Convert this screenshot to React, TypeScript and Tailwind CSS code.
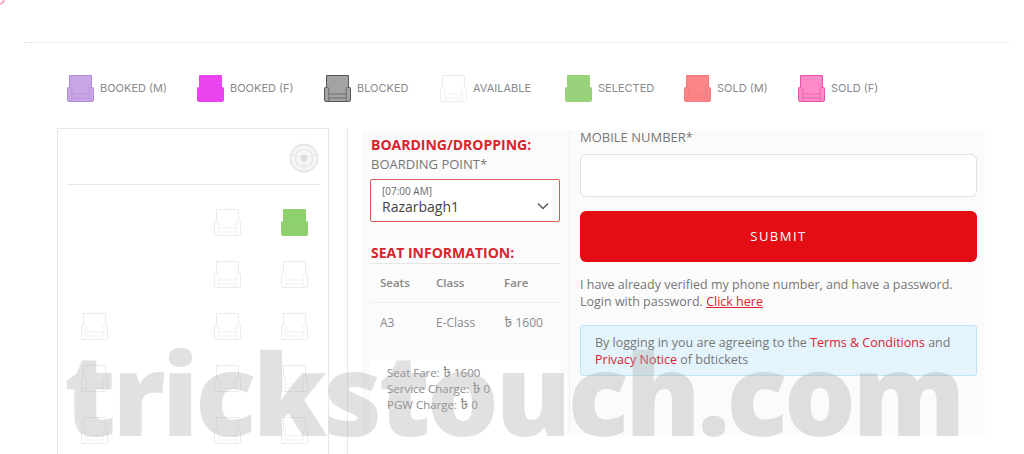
type SeatProps = {
  fill: string;
  stroke: string;
};

const legend = [
  { label: "BOOKED (M)", fill: "#c9a6e6", stroke: "#b08fd6", gap: "w-[130px]" },
  { label: "BOOKED (F)", fill: "#ea44ee", stroke: "#ea44ee", gap: "w-[127px]" },
  { label: "BLOCKED", fill: "#a3a3a3", stroke: "#555555", gap: "w-[116px]" },
  { label: "AVAILABLE", fill: "#ffffff", stroke: "#ececec", gap: "w-[125px]" },
  { label: "SELECTED", fill: "#98d27a", stroke: "#98d27a", gap: "w-[119px]" },
  { label: "SOLD (M)", fill: "#fc8585", stroke: "#f27c7c", gap: "w-[114px]" },
  { label: "SOLD (F)", fill: "#ff8ac8", stroke: "#e952a8", gap: "w-[100px]" }
];

const free = { fill: "#ffffff", stroke: "#ebebeb" };

function Seat({ fill, stroke }: SeatProps) {
  return (
    <svg width="27" height="27" viewBox="0 0 27 27" className="block shrink-0">
      <path
        d="M2.500.500h22v12h1.200a.8.8 0 0 1 .8.8V25a1.500 1.500 0 0 1-1.500 1.500H2A1.500 1.500 0 0 1 .5 25V13.300a.8.8 0 0 1 .8-.8h1.200z"
        fill={fill}
        stroke={stroke}
      />
      <path
        d="M2.500 12.500h1.300a1 1 0 0 1 1 1V26.500M24.500 12.500h-1.300a1 1 0 0 0-1 1V26.500M4.800 19h17.400M4.800 23h17.400"
        fill="none"
        stroke={stroke}
        strokeOpacity="0.7"
      />
    </svg>
  );
}

function Taka() {
  return <span className="font-['Noto_Sans_Bengali','Noto_Sans','DejaVu_Sans',sans-serif] text-[14px] leading-none">৳</span>;
}

export default function App() {
  return (
    <div className="relative h-[454px] w-[1024px] overflow-hidden bg-white font-['Open_Sans',sans-serif] text-[#777777]">
      <div className="absolute -left-[7px] -top-[7px] h-[12px] w-[12px] rounded-full border-2 border-[#f3a9b5]" />

      <div className="ml-[24px] w-[986px] pt-[42px]">
        <div className="border-t border-dotted border-[#dddddd]" />
      </div>

      <div className="ml-[67px] mt-[32px] flex h-[27px] items-center">
        {legend.map((item) => (
          <div key={item.label} className={`flex items-center gap-[6px] ${item.gap}`}>
            <Seat fill={item.fill} stroke={item.stroke} />
            <span className="whitespace-nowrap font-['Inter',sans-serif] text-[11px] text-[#8a8a8a]">{item.label}</span>
          </div>
        ))}
      </div>

      <div className="ml-[57px] mt-[26px] flex items-start">
        <div className="h-[340px] w-[272px] border border-[#e8e8e8] px-[9px] pt-[14px]">
          <div className="flex justify-end">
            <svg width="30" height="30" viewBox="0 0 30 30" className="block">
              <circle cx="15" cy="15" r="13.500" fill="#f7f7f7" stroke="#e6e6e6" strokeWidth="2" />
              <circle cx="15" cy="15" r="9" fill="none" stroke="#ebebeb" strokeWidth="2" />
              <path d="M3 11l7 3M27 11l-7 3M15 20v7" stroke="#ebebeb" strokeWidth="2" />
              <circle cx="15" cy="15" r="3.500" fill="#dcdcdc" />
            </svg>
          </div>
          <div className="mt-[11px] border-t border-[#e6e6e6]" />
          <div className="ml-[14px] mt-[24px] grid grid-cols-[repeat(4,27px)] gap-x-[39.500px] gap-y-[25px]">
            <div className="col-start-3">
              <Seat {...free} />
            </div>
            <Seat fill="#8fd06e" stroke="#8fd06e" />
            <div className="col-start-3">
              <Seat {...free} />
            </div>
            <Seat {...free} />
            <Seat {...free} />
            <div className="col-start-3">
              <Seat {...free} />
            </div>
            <Seat {...free} />
            <Seat {...free} />
            <div className="col-start-3">
              <Seat {...free} />
            </div>
            <Seat {...free} />
            <Seat {...free} />
            <div className="col-start-3">
              <Seat {...free} />
            </div>
            <Seat {...free} />
          </div>
        </div>

        <div className="ml-[18px] h-[340px] border-l border-[#e8e8e8]" />

        <div className="ml-[14px] mt-[2px] flex h-[305px] w-[623px] bg-[#fbfbfb]">
          <div className="w-[208px] border-r border-[#eeeeee] pl-[8px] pr-[9px]">
            <h3 className="ml-px mt-[6px] text-[14px] font-bold leading-[18px] text-[#d9232e]">BOARDING/DROPPING:</h3>
            <p className="ml-px mt-[1px] text-[13px] leading-[18px]">BOARDING POINT*</p>
            <div className="relative mt-[6px] h-[43px] rounded-[2px] border border-[#dc5a55] bg-white pl-[11px] pt-[5px]">
              <p className="text-[10px] leading-[13px] text-[#666666]">[07:00 AM]</p>
              <p className="text-[14px] leading-[18px] text-[#444444]">Razarbagh1</p>
              <svg width="12" height="8" viewBox="0 0 12 8" className="absolute right-[10px] top-[22px]">
                <path d="M1 1.500l5 5 5-5" fill="none" stroke="#555555" strokeWidth="1.400" />
              </svg>
            </div>
            <h3 className="ml-px mt-[22px] text-[14px] font-bold leading-[18px] text-[#d9232e]">SEAT INFORMATION:</h3>
            <div className="mt-[1px] border-t border-[#e6e6e6]">
              <div className="grid h-[39px] grid-cols-[56px_68px_1fr] items-center border-b border-[#f0f0f0] pl-[10px] text-[11.500px] font-semibold text-[#888888]">
                <span>Seats</span>
                <span>Class</span>
                <span>Fare</span>
              </div>
              <div className="grid h-[40px] grid-cols-[56px_68px_1fr] items-center pl-[10px] text-[12px] text-[#8a8a8a]">
                <span>A3</span>
                <span>E-Class</span>
                <span>
                  <Taka /> 1600
                </span>
              </div>
            </div>
            <div className="mt-[17px] h-[75px] bg-white pl-[17px] pt-[5px] text-[11.500px] leading-[15.500px] text-[#888888]">
              <p>
                Seat Fare: <Taka /> 1600
              </p>
              <p>
                Service Charge: <Taka /> 0
              </p>
              <p>
                PGW Charge: <Taka /> 0
              </p>
            </div>
          </div>

          <div className="ml-[10px] w-[397px]">
            <p className="-mt-[2px] text-[13px] leading-[18px] text-[#777777]">MOBILE NUMBER*</p>
            <div className="mt-[8px] h-[43px] rounded-[6px] border border-[#e2e2e2] bg-white" />
            <button className="mt-[14px] block h-[51px] w-full rounded-[6px] bg-[#e30d13] text-[13px] tracking-[1.500px] text-white">
              SUBMIT
            </button>
            <p className="mt-[14px] text-[12.500px] leading-[17px] text-[#777777]">
              I have already verified my phone number, and have a password.
              <br />
              Login with password. <span className="text-[#d9232e] underline">Click here</span>
            </p>
            <div className="mt-[15px] h-[51px] rounded-[3px] border border-[#bde6f7] bg-[#e3f4fc] pl-[14px] pt-[8px] text-[12.500px] leading-[17px] text-[#777777]">
              By logging in you are agreeing to the <span className="text-[#d9232e]">Terms &amp; Conditions</span> and
              <br />
              <span className="text-[#d9232e]">Privacy Notice</span> of bdtickets
            </div>
          </div>
        </div>
      </div>

      <div className="pointer-events-none absolute left-[64px] top-[327px] whitespace-nowrap font-['Open_Sans',sans-serif] text-[113px] font-extrabold leading-[130px] tracking-[-3.500px] text-[#a9a9a9]/35">
        trickstouch.com
      </div>
    </div>
  );
}
